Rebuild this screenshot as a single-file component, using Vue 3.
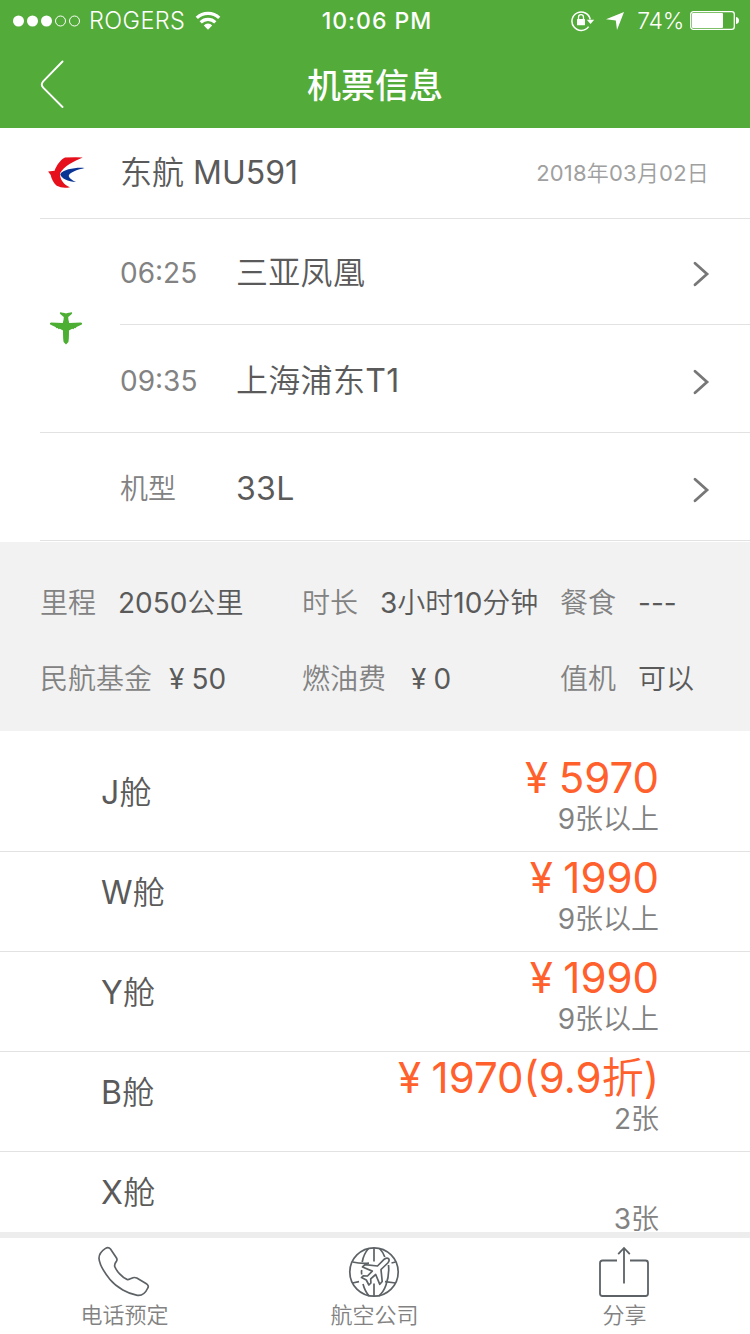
<script setup>
import { ref } from "vue";

const stops = ref([
  { label: "06:25", name: "三亚凤凰" },
  { label: "09:35", name: "上海浦东T1" },
]);

const info = ref([
  { label: "里程", value: "2050公里", gap: 22 },
  { label: "时长", value: "3小时10分钟", gap: 22 },
  { label: "餐食", value: "---", gap: 22 },
  { label: "民航基金", value: "50", gap: 17, money: true },
  { label: "燃油费", value: "0", gap: 25, money: true },
  { label: "值机", value: "可以", gap: 22 },
]);

const cabins = ref([
  { name: "J舱", price: "5970", left: "9张以上" },
  { name: "W舱", price: "1990", left: "9张以上" },
  { name: "Y舱", price: "1990", left: "9张以上" },
  { name: "B舱", price: "1970(9.9折)", left: "2张" },
  { name: "X舱", price: "", left: "3张" },
]);
</script>

<template>
  <div class="page">
    <header class="header">
      <div class="status">
        <div class="status-left">
          <svg class="signal" width="68" height="12" viewBox="0 0 68 12">
            <circle cx="5.5" cy="6" r="5.5" fill="#fff" />
            <circle cx="19.5" cy="6" r="5.5" fill="#fff" />
            <circle cx="33.5" cy="6" r="5.5" fill="#fff" />
            <circle cx="47.5" cy="6" r="5" fill="none" stroke="#fff" />
            <circle cx="61.5" cy="6" r="5" fill="none" stroke="#fff" />
          </svg>
          <span class="carrier">ROGERS</span>
          <svg class="wifi" width="26" height="20" viewBox="0 0 26 20">
            <g fill="none" stroke="#fff" stroke-width="3.2">
              <path d="M1.8 6.9A16 16 0 0 1 24.2 6.9" />
              <path d="M5.7 11.3A10.5 10.5 0 0 1 20.3 11.3" />
            </g>
            <path d="M8.8 14.4A5.8 5.8 0 0 1 17.2 14.4L13 18.8Z" fill="#fff" />
          </svg>
        </div>
        <span class="clock">10:06 PM</span>
        <div class="status-right">
          <svg class="lock" width="24" height="22" viewBox="0 0 24 22">
            <path d="M17.6 16.6A9.2 9.2 0 1 1 19.2 9.5" fill="none" stroke="#fff" stroke-width="1.5" />
            <path d="M15.8 9.8H23.2L19.5 14Z" fill="#fff" />
            <rect x="6" y="9" width="8" height="6.3" rx=".6" fill="#fff" />
            <path d="M7.5 9.5V7.2A2.5 2.5 0 0 1 12.5 7.2V9.5" fill="none" stroke="#fff" stroke-width="1.3" />
          </svg>
          <svg class="arrow" width="18" height="18" viewBox="0 0 18 18">
            <path d="M18 0L11 18L9.8 8.6L0 7.3Z" fill="#fff" />
          </svg>
          <span class="percent">74%</span>
          <svg class="battery" width="49" height="19" viewBox="0 0 49 19">
            <rect x=".7" y=".7" width="43.6" height="17.6" rx="2.6" fill="none" stroke="#fff" stroke-width="1.3" />
            <rect x="2" y="2" width="31" height="15" rx="1" fill="#fff" />
            <path d="M46 6C48.5 6.5 49 8 49 9.5S48.5 12.5 46 13Z" fill="#fff" />
          </svg>
        </div>
      </div>
      <div class="nav">
        <svg class="back" width="26" height="50" viewBox="0 0 26 50">
          <path
            d="M22.5 1.5L3.2 21.3Q.4 24.5 3.2 27.7L22.5 47"
            fill="none"
            stroke="#fff"
            stroke-width="1.9"
            stroke-linecap="round"
          />
        </svg>
        <h1>机票信息</h1>
      </div>
    </header>

    <section class="flight">
      <svg class="logo" width="38" height="32" viewBox="0 0 38 32">
        <path
          d="M18 .6Q26 .1 35.7 .4C27 4 17 9 13 16.2C12.5 22 17 28 23 30.2Q15.5 31.8 9.7 28.7C6.5 26 4.5 22 3.7 18L1.1 14.4L7.6 13.8C9.5 8 14.5 2 18 .6Z"
          fill="#e60f1c"
        />
        <path
          d="M37.5 11C28.5 10.2 16.5 12.5 13.2 17C14 21.5 21 24.8 29 25C24.5 22.8 21.6 20.5 21.8 18.4C23.5 14.8 31 12.6 37.5 11Z"
          fill="#0b3595"
        />
      </svg>
      <span class="number">东航 MU591</span>
      <span class="date">2018年03月02日</span>
    </section>

    <section class="route">
      <div class="plane">
        <svg width="34" height="34" viewBox="0 0 34 34">
          <path
            d="M17 2.6L18.6 2L22.8 1.2Q23.6 1.8 22.8 2.9L19.2 6L19.4 8.5L20.2 12L32 11.4Q33.8 11.8 32.8 13.4L27.5 16L26.5 17.2L25.4 16.9L24.4 18.3L23.2 17.8L20 19.4Q20 28 19.4 31L17 33.4L14.6 31Q14 28 14 19.4L10.8 17.8L9.6 18.3L8.6 16.9L7.5 17.2L6.5 16L1.2 13.4Q.2 11.8 2 11.4L13.8 12L14.6 8.5L14.8 6L11.2 2.9Q10.4 1.8 11.2 1.2L15.4 2Z"
            fill="#4cae33"
          />
        </svg>
      </div>
      <div class="stops">
        <div v-for="stop in stops" :key="stop.label" class="row">
          <span class="label">{{ stop.label }}</span>
          <span class="value">{{ stop.name }}</span>
          <svg class="chevron" width="18" height="26" viewBox="0 0 18 26">
            <path d="M3 2.3L15 13L3 23.7" fill="none" stroke="#777" stroke-width="2.8" stroke-linecap="round" />
          </svg>
        </div>
      </div>
    </section>

    <div class="row model">
      <span class="label">机型</span>
      <span class="value">33L</span>
      <svg class="chevron" width="18" height="26" viewBox="0 0 18 26">
        <path d="M3 2.3L15 13L3 23.7" fill="none" stroke="#777" stroke-width="2.8" stroke-linecap="round" />
      </svg>
    </div>

    <section class="info">
      <div v-for="item in info" :key="item.label" class="info-item">
        <span class="info-label">{{ item.label }}</span>
        <span class="info-value" :style="{ marginLeft: item.gap + 'px' }">
          <i v-if="item.money" class="yen">¥</i>{{ item.value }}
        </span>
      </div>
    </section>

    <ul class="cabins">
      <li v-for="cabin in cabins" :key="cabin.name" class="cabin">
        <span class="cabin-name">{{ cabin.name }}</span>
        <div class="cabin-right">
          <div class="price"><template v-if="cabin.price"><i class="yen">¥</i>{{ cabin.price }}</template></div>
          <div class="left">{{ cabin.left }}</div>
        </div>
      </li>
    </ul>

    <footer class="tabs">
      <button class="tab">
        <svg width="52" height="52" viewBox="0 0 52 52">
          <path
            d="M7.5 2.4C9.5 1 11 1.2 12.5 3L18.5 12Q19.6 14 18.2 15.6Q16.3 17.8 16.7 20.5C18.5 25 24 31.5 29 33.4Q30.3 33.8 31.8 33L35 31.7Q36.8 31.2 38.8 32L48 37.6Q51.3 39.6 49.8 42C47.5 47 43.5 50.2 38.5 49.2C30.5 47.6 19 42 12 33.5C6 26 1.5 19 1 12.5C.9 8.5 3.5 5 7.5 2.4Z"
            fill="none"
            stroke="#5d6266"
            stroke-width="1.7"
          />
        </svg>
        <span>电话预定</span>
      </button>
      <button class="tab">
        <svg width="52" height="52" viewBox="0 0 52 52" fill="none" stroke="#5d6266" stroke-width="1.7">
          <circle cx="26" cy="26" r="24.2" />
          <path d="M26 2V15.5M26 37.5V50" />
          <path d="M20.5 2.5C17 6.5 15 11 14.2 16M31.5 2.5Q35 6 36.8 11M40.5 19Q41.5 29 38 39Q35.5 46 31 49.8M13.8 24Q13.2 26 13.8 28.5M15 38Q17 45.5 21 49.8" />
          <path d="M4.5 16Q13 18 21 17.2M43.5 17L47.6 16M4.5 37L11 35.7M37 35.7L47.5 37" />
          <path
            d="M14.5 21L17 18.7L29.5 20L36.3 13.2Q39 11.2 40.5 12.7Q42 14.3 39.8 17L33 23.5L34.2 35.5L31.8 38.3L27.7 28.5L22.7 32.8L22.9 37L20.9 39L18.3 34L13.5 31.6L15.3 29.8L19.5 30L24.3 25.1Z"
            stroke-linejoin="round"
          />
        </svg>
        <span>航空公司</span>
      </button>
      <button class="tab">
        <svg width="52" height="52" viewBox="0 0 52 52" fill="none" stroke="#5d6266" stroke-width="1.8">
          <path d="M19 14.5H4.5Q2 14.5 2 17V47.5Q2 50 4.5 50H47.5Q50 50 50 47.5V17Q50 14.5 47.5 14.5H32" />
          <path d="M26 37.5V2M20.2 8.2L26 2L31.8 8.2" />
        </svg>
        <span>分享</span>
      </button>
    </footer>
  </div>
</template>

<style>
body {
  margin: 0;
  background: #fff;
}
</style>

<style scoped>
.page {
  display: flex;
  flex-direction: column;
  width: 750px;
  height: 1334px;
  overflow: hidden;
  background: #fff;
  color: #5a5a5a;
  font-family: Inter, "Noto Sans CJK SC DemiLight", "Noto Sans CJK SC Light", "Noto Sans CJK SC", sans-serif;
  font-weight: 400;
}

.header {
  height: 128px;
  flex: none;
  background: #53ab39;
  color: #fff;
}

.status {
  display: grid;
  grid-template-columns: 1fr auto 1fr;
  align-items: center;
  height: 40px;
  padding: 0 11px 0 13px;
  font-size: 24px;
  line-height: 40px;
}

.status-left,
.status-right {
  display: flex;
  align-items: center;
}

.status-right {
  justify-content: flex-end;
}

.carrier {
  margin-left: 8px;
  font-size: 23.5px;
  font-weight: 350;
  letter-spacing: 0.4px;
}

.wifi {
  margin-left: 10px;
}

.clock {
  margin: 1px 0 0 2px;
  font-size: 23px;
  font-weight: 500;
  letter-spacing: 1px;
}

.arrow {
  margin: 1px 0 0 11px;
}

.percent {
  margin: 1px 6px 0 13px;
  font-size: 23px;
  font-weight: 350;
  letter-spacing: -0.3px;
}

.nav {
  display: grid;
  grid-template-columns: 100px 1fr 100px;
  align-items: center;
  height: 88px;
}

.back {
  margin: 1px 0 0 40px;
}

h1 {
  margin: 0;
  padding-top: 3px;
  font-family: Inter, "Noto Sans CJK SC Medium", "Noto Sans CJK SC", sans-serif;
  font-size: 34px;
  font-weight: 500;
  line-height: 48px;
  text-align: center;
}

.flight {
  display: flex;
  align-items: center;
  flex: none;
  height: 90px;
  margin-left: 40px;
  padding: 0 41px 0 7px;
  border-bottom: 1px solid #e2e2e2;
}

.number {
  margin-left: 35px;
  font-size: 32px;
  line-height: 48px;
}

.date {
  margin-left: auto;
  color: #a0a0a0;
  font-size: 22px;
  line-height: 32px;
  letter-spacing: 0.2px;
}

.route {
  display: flex;
  flex: none;
  margin-left: 40px;
  border-bottom: 1px solid #e2e2e2;
}

.plane {
  display: flex;
  align-items: center;
  width: 80px;
  padding: 4px 0 0 9px;
  box-sizing: border-box;
}

.stops {
  flex: 1;
}

.row {
  display: flex;
  align-items: center;
  height: 107px;
  padding: 4px 40px 0 0;
  box-sizing: border-box;
}

.row:first-child {
  height: 106px;
  padding-top: 2px;
  border-bottom: 1px solid #e2e2e2;
}

.label {
  width: 116px;
  color: #828282;
  font-size: 28px;
  line-height: 40px;
}

.value {
  flex: 1;
  font-size: 32px;
  line-height: 48px;
  letter-spacing: 0.3px;
}

.chevron {
  margin-top: 2px;
}

.row.model {
  flex: none;
  height: 108px;
  margin-left: 40px;
  padding-left: 80px;
  border-bottom: 1px solid #e2e2e2;
}

.info {
  display: grid;
  grid-template-columns: 262px 258px 1fr;
  grid-template-rows: 76px 76px;
  flex: none;
  height: 189px;
  margin-top: 1px;
  padding: 23px 0 0 40px;
  box-sizing: border-box;
  background: #f2f2f2;
  font-size: 28px;
  line-height: 40px;
}

.info-item {
  display: flex;
  align-items: center;
  white-space: nowrap;
}

.info-label {
  color: #828282;
}

.yen {
  margin-right: 0.25em;
  font-style: normal;
}

.cabins {
  flex: 1;
  min-height: 0;
  margin: 0;
  padding: 21px 0 0;
  overflow: hidden;
  list-style: none;
}

.cabin {
  display: flex;
  justify-content: space-between;
  height: 100px;
  padding: 1px 91px 0 101px;
  box-sizing: border-box;
  border-bottom: 1px solid #e2e2e2;
}

.cabin-name {
  padding-top: 15px;
  font-size: 32px;
  line-height: 50px;
  letter-spacing: 0.3px;
}

.cabin-right {
  text-align: right;
}

.price {
  height: 52px;
  color: #ff602c;
  font-size: 42px;
  line-height: 50px;
}

.left {
  color: #828282;
  font-size: 28px;
  line-height: 28px;
}

.tabs {
  display: grid;
  grid-template-columns: repeat(3, 1fr);
  flex: none;
  height: 102px;
  box-sizing: border-box;
  border-top: 6px solid #ededed;
}

.tab {
  display: flex;
  flex-direction: column;
  align-items: center;
  padding: 8px 1px 0 0;
  border: none;
  background: transparent;
  color: #828282;
  font: inherit;
  font-size: 22px;
  line-height: 35px;
}

.tab svg {
  margin-right: 1px;
}
</style>
